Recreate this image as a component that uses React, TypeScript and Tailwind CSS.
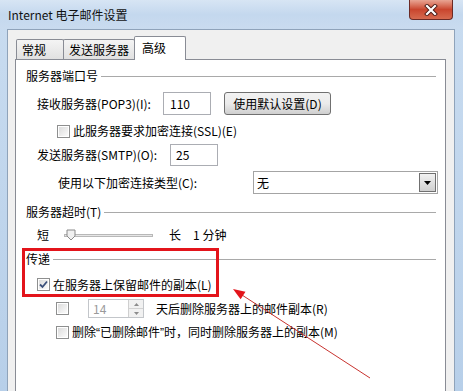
import React from "react";

const font = { fontFamily: '"Noto Sans CJK SC", "Microsoft YaHei", sans-serif' };

function Checkbox({ checked = false }: { checked?: boolean }) {
  return (
    <div className="w-[13px] h-[13px] shrink-0 border border-[#8e8f8f] bg-white p-[1px]">
      <div className="w-full h-full bg-gradient-to-br from-[#dcdcdc] to-[#fbfbfb] flex items-center justify-center">
        {checked && (
          <svg width="9" height="9" viewBox="0 0 9 9">
            <path d="M1 4.5 L3.5 7 L8 1.5" fill="none" stroke="#3a4f7a" strokeWidth="1.8" />
          </svg>
        )}
      </div>
    </div>
  );
}

function GroupHeader({ label, className }: { label: string; className?: string }) {
  return (
    <div className={"flex items-center h-[16px] pl-[10px] pr-[9px] " + (className ?? "")}>
      <span className="whitespace-nowrap">{label}</span>
      <div className="flex-1 h-px bg-[#a9a9a9] ml-[3px]" />
    </div>
  );
}

function Tab({ label, active = false, className }: { label: string; active?: boolean; className?: string }) {
  if (active) {
    return (
      <div
        className={
          "h-[24px] -mb-px bg-white border border-b-0 border-[#898c95] rounded-t-[2px] flex items-start pt-[3px] pl-[7px] relative z-10 " +
          (className ?? "")
        }
      >
        {label}
      </div>
    );
  }
  return (
    <div
      className={
        "h-[20px] bg-gradient-to-b from-[#f4f4f4] to-[#e1e1e1] border border-b-0 border-[#898c95] rounded-t-[2px] flex items-center pl-[5px] " +
        (className ?? "")
      }
    >
      {label}
    </div>
  );
}

export default function App() {
  return (
    <div
      className="relative w-[463px] h-[391px] overflow-hidden bg-gradient-to-b from-[#c9dcf0] to-[#b7cfe9] text-[12px] leading-[16px] text-[#000]"
      style={font}
    >
      {/* title bar */}
      <div className="h-[29px] flex justify-between bg-gradient-to-b from-[#d7e5f4] via-[#c4d8ee] to-[#c9dbef]">
        <div className="pl-[8px] pt-[7px] text-[#111]">Internet 电子邮件设置</div>
        <div className="mr-[10px] w-[44px] h-[20px] rounded-b-[4px] border border-t-0 border-[#6b2a25] bg-gradient-to-b from-[#e8a493] via-[#c9452e] to-[#d66a4f] flex items-center justify-center">
          <svg width="14" height="12" viewBox="0 0 14 12">
            <path d="M3 2 L11 10 M11 2 L3 10" stroke="#4a1a14" strokeWidth="4" strokeLinecap="square" />
            <path d="M3 2 L11 10 M11 2 L3 10" stroke="#ffffff" strokeWidth="2.2" strokeLinecap="square" />
          </svg>
        </div>
      </div>

      {/* client area */}
      <div className="ml-[7px] mr-[8px] h-[362px] bg-[#f0f0f0] border-t border-l border-r border-[#8fa3ba] pt-[6px] pl-[7px] pr-[8px] flex flex-col">
        <div className="flex items-end pl-[1px] relative z-10 h-[23px]">
          <Tab label="常规" className="w-[48px]" />
          <Tab label="发送服务器" className="w-[72px] -ml-px" />
          <Tab label="高级" active className="w-[52px] -ml-px" />
        </div>

        <div className="flex-1 bg-white border border-[#898c95] border-b-0 flex flex-col">
          <GroupHeader label="服务器端口号" className="mt-[8px]" />

          <div className="mt-[8px] flex items-center h-[23px] pl-[21px]">
            <span className="w-[126px] whitespace-nowrap">接收服务器(POP3)(I):</span>
            <div className="w-[48px] h-[23px] border border-[#abadb3] flex items-center pl-[6px]">110</div>
            <div className="ml-[13px] w-[107px] h-[23px] rounded-[3px] border border-[#707070] bg-gradient-to-b from-[#f2f2f2] via-[#ebebeb] to-[#cfcfcf] flex items-center justify-center">
              使用默认设置(D)
            </div>
          </div>

          <div className="mt-[9px] flex items-center h-[14px] pl-[41px] gap-[3px]">
            <Checkbox />
            <span>此服务器要求加密连接(SSL)(E)</span>
          </div>

          <div className="mt-[6px] flex items-center h-[22px] pl-[21px]">
            <span className="w-[133px] whitespace-nowrap">发送服务器(SMTP)(O):</span>
            <div className="w-[48px] h-[22px] border border-[#abadb3] flex items-center pl-[5px]">25</div>
          </div>

          <div className="mt-[5px] flex items-center h-[23px] pl-[42px]">
            <span className="w-[195px] whitespace-nowrap">使用以下加密连接类型(C):</span>
            <div className="w-[185px] h-[23px] border border-[#a4a4a4] flex items-center justify-between pl-[3px] pr-[1px]">
              <span>无</span>
              <div className="w-[17px] h-[19px] border border-[#707070] bg-gradient-to-b from-[#f2f2f2] to-[#cfcfcf] flex items-center justify-center">
                <svg width="7" height="4" viewBox="0 0 7 4">
                  <path d="M0 0 H7 L3.5 4 Z" fill="#000" />
                </svg>
              </div>
            </div>
          </div>

          <GroupHeader label="服务器超时(T)" className="mt-[10px]" />

          <div className="mt-[6px] flex items-center h-[18px] pl-[21px]">
            <span>短</span>
            <div className="ml-[15px] w-[89px] h-[12px] relative flex items-center">
              <div className="w-full h-[3px] border border-[#b8b8b8] bg-[#e6e6e6]" />
              <svg className="absolute left-[2px] top-0" width="10" height="12" viewBox="0 0 10 12">
                <path d="M1 1 H9 V7 L5 11 L1 7 Z" fill="#f0f0f0" stroke="#8a8a8a" />
              </svg>
            </div>
            <span className="ml-[16px]">长</span>
            <span className="ml-[12px]">1 分钟</span>
          </div>

          <GroupHeader label="传递" className="mt-[7px]" />

          <div className="mt-[11px] flex items-center h-[13px] pl-[21px] gap-[3px]">
            <Checkbox checked />
            <span>在服务器上保留邮件的副本(L)</span>
          </div>

          <div className="mt-[8px] flex items-center h-[19px] pl-[40px]">
            <Checkbox />
            <div className="ml-[19px] w-[56px] h-[19px] border border-[#c3c6ca] flex items-center justify-between pl-[4px] text-[#9a9a9a]">
              <span>14</span>
              <div className="w-[15px] h-full flex flex-col border-l border-[#cfcfcf]">
                <div className="flex-1 bg-[#f1f1f1] border-b border-[#d2d2d2] flex items-center justify-center">
                  <svg width="5" height="3" viewBox="0 0 5 3"><path d="M0 3 L2.5 0 L5 3 Z" fill="#8c8c8c" /></svg>
                </div>
                <div className="flex-1 bg-[#f1f1f1] flex items-center justify-center">
                  <svg width="5" height="3" viewBox="0 0 5 3"><path d="M0 0 L2.5 3 L5 0 Z" fill="#8c8c8c" /></svg>
                </div>
              </div>
            </div>
            <span className="ml-[12px]">天后删除服务器上的邮件副本(R)</span>
          </div>

          <div className="mt-[8px] flex items-center h-[13px] pl-[40px] gap-[3px]">
            <Checkbox />
            <span>
              删除<span className="font-['Liberation_Sans']">“</span>已删除邮件<span className="font-['Liberation_Sans']">”</span>时，同时删除服务器上的副本(M)
            </span>
          </div>
        </div>
      </div>

      {/* annotation overlay */}
      <div className="absolute left-[22px] top-[248px] w-[197px] h-[49px] border-[3px] border-[#e3141b]" />
      <svg className="absolute left-0 top-0 pointer-events-none" width="463" height="391" viewBox="0 0 463 391">
        <line x1="370" y1="378" x2="242" y2="295" stroke="#c8332f" strokeWidth="1" />
        <polygon points="233,289 245.5,291.8 240.6,299.2" fill="#e3141b" />
      </svg>
    </div>
  );
}
